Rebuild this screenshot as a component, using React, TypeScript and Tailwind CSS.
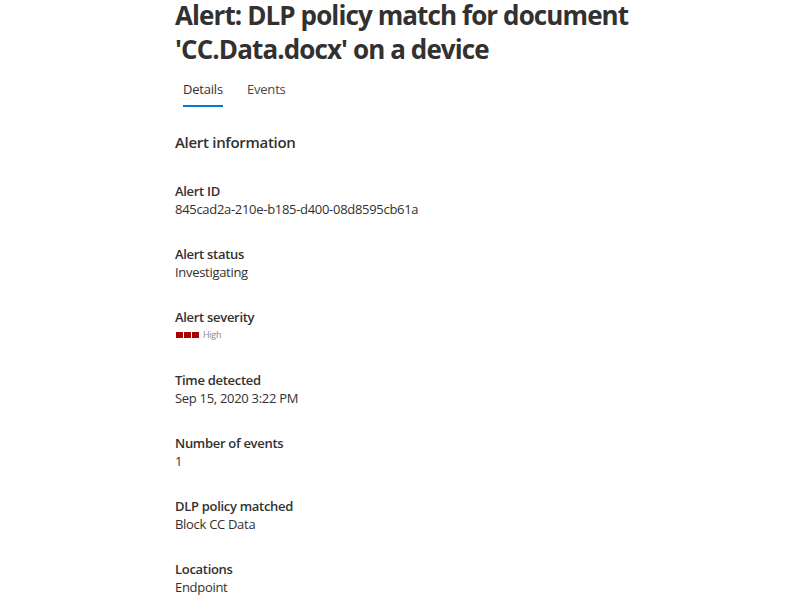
const fields = [
  { label: "Alert ID", value: "845cad2a-210e-b185-d400-08d8595cb61a" },
  { label: "Alert status", value: "Investigating" },
  { label: "Alert severity", value: null },
  { label: "Time detected", value: "Sep 15, 2020 3:22 PM" },
  { label: "Number of events", value: "1" },
  { label: "DLP policy matched", value: "Block CC Data" },
  { label: "Locations", value: "Endpoint" },
];

const Severity = () => (
  <div className="flex items-center h-[18px] gap-[4px]">
    <div className="flex gap-[1px] pl-[1px]">
      <span className="w-[7px] h-[6px] bg-[#a80000]" />
      <span className="w-[7px] h-[6px] bg-[#a80000]" />
      <span className="w-[7px] h-[6px] bg-[#a80000]" />
    </div>
    <span className="text-[9px] text-[#8a8886]">High</span>
  </div>
);

export default function App() {
  return (
    <div
      className="w-[800px] h-[600px] overflow-hidden bg-white text-[#323130]"
      style={{ fontFamily: '"Open Sans", "Noto Sans", sans-serif' }}
    >
      <div className="ml-[175px] w-[480px]">
        <h1 className="text-[26px] leading-[34px] font-bold -mt-[2px] tracking-[-0.9px]">
          Alert: DLP policy match for document 'CC.Data.docx' on a device
        </h1>

        <div className="flex gap-[24px] mt-[13px] px-[8px] text-[13px] tracking-[-0.2px]">
          <div className="flex flex-col items-center">
            <span className="leading-[20px]">Details</span>
            <span className="mt-[6px] h-[2px] w-full bg-[#0078d4]" />
          </div>
          <span className="leading-[20px] text-[#484644]">Events</span>
        </div>

        <h2 className="mt-[25px] text-[15px] leading-[20px] font-semibold tracking-[-0.3px]">
          Alert information
        </h2>

        <div className="mt-[30px] flex flex-col gap-[27px]">
          {fields.map((f) => (
            <div key={f.label} className="text-[13px] leading-[18px] tracking-[-0.3px]">
              <div className="font-semibold">{f.label}</div>
              {f.value === null ? <Severity /> : <div>{f.value}</div>}
            </div>
          ))}
        </div>
      </div>
    </div>
  );
}
